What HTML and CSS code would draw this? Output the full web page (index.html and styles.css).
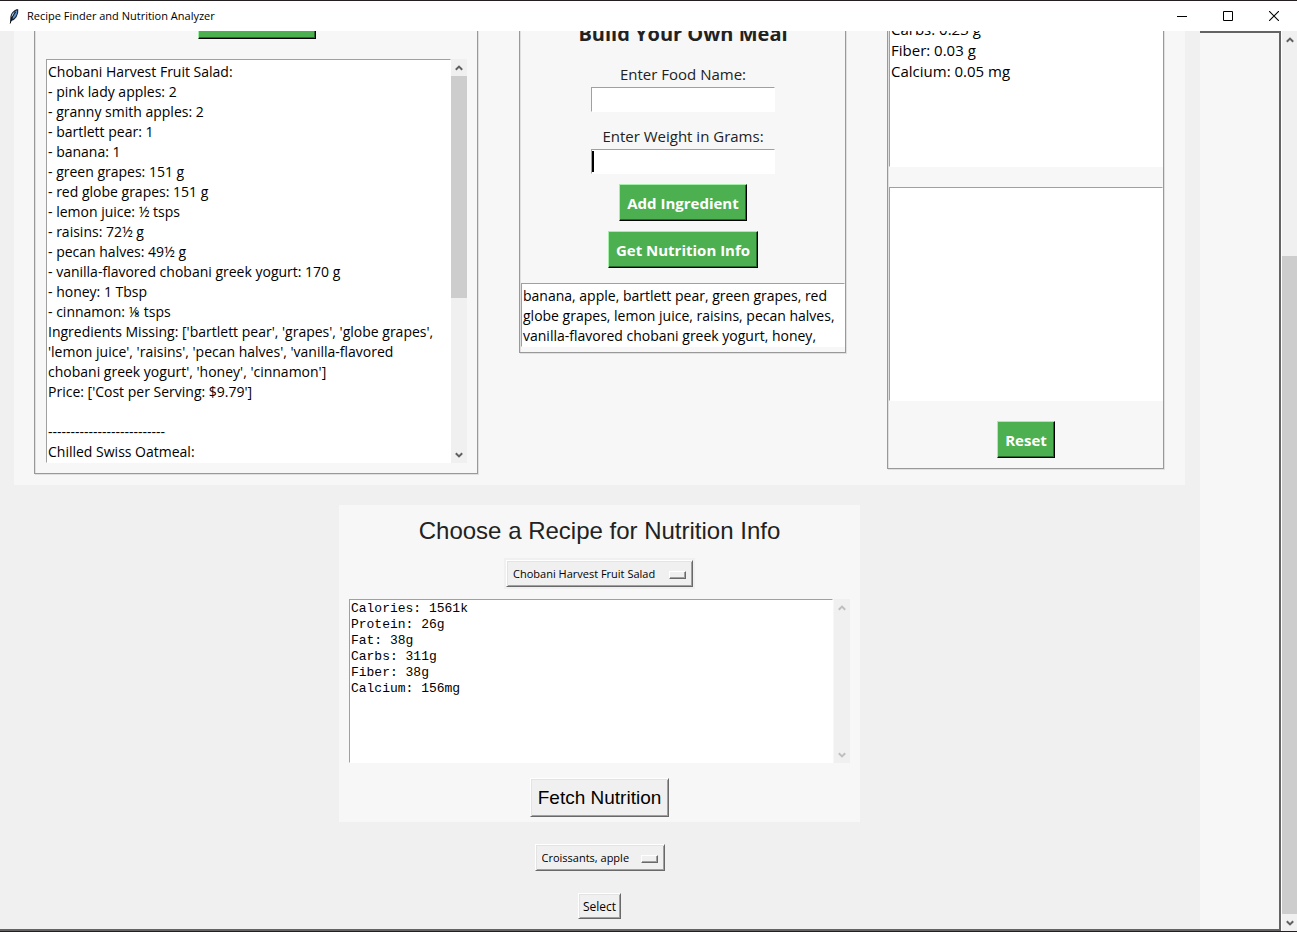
FILE: index.html
```html
<!DOCTYPE html>
<html lang="en">
<head>
<meta charset="utf-8">
<title>Recipe Finder and Nutrition Analyzer</title>
<link rel="stylesheet" href="styles.css">
</head>
<body>
<div class="window">
  <header class="titlebar">
    <svg class="feather" width="16" height="16" viewBox="0 0 16 16" aria-hidden="true">
      <path d="M4 14.5 L4.4 8.5 Q5.5 3 11 1 L12.3 1.4 Q12.8 5 10.6 9 Q8.8 12 5.2 13 Z" fill="#1c2430"/>
      <path d="M6.6 10 Q7 5 10.8 2.2 Q11.8 4 9.8 8 Q8.8 10 6.6 11 Z" fill="#5d93d0"/>
      <path d="M5.4 9 Q6 5 8.6 3.4 L6.6 8.4 Z" fill="#a9c6e6"/>
      <path d="M4.2 15.5 Q5.4 9 9.6 4" fill="none" stroke="#111" stroke-width="1"/>
    </svg>
    <h1 class="title">Recipe Finder and Nutrition Analyzer</h1>
    <div class="controls">
      <button class="control" type="button" aria-label="Minimize"><svg width="10" height="10" viewBox="0 0 10 10"><path d="M0 5.5H10" stroke="#000"/></svg></button>
      <button class="control" type="button" aria-label="Maximize"><svg width="10" height="10" viewBox="0 0 10 10"><path d="M.5 .5H9.5V9.5H.5Z" fill="none" stroke="#000"/></svg></button>
      <button class="control" type="button" aria-label="Close"><svg width="10" height="10" viewBox="0 0 10 10"><path d="M0 0L10 10M10 0L0 10" stroke="#000" stroke-width="1.1"/></svg></button>
    </div>
  </header>
  <div class="body">
    <div class="canvas">
      <main class="content">
        <div class="columns">
          <section class="frame frame-recipes">
            <button class="btn btn-green btn-find" type="button" aria-label="Find recipes"></button>
            <div class="scrolled">
              <textarea class="text recipes" rows="20" aria-label="Recipes" spellcheck="false">Chobani Harvest Fruit Salad:
- pink lady apples: 2
- granny smith apples: 2
- bartlett pear: 1
- banana: 1
- green grapes: 151 g
- red globe grapes: 151 g
- lemon juice: ½ tsps
- raisins: 72½ g
- pecan halves: 49½ g
- vanilla-flavored chobani greek yogurt: 170 g
- honey: 1 Tbsp
- cinnamon: ⅛ tsps
Ingredients Missing: ['bartlett pear', 'grapes', 'globe grapes',
'lemon juice', 'raisins', 'pecan halves', 'vanilla-flavored
chobani greek yogurt', 'honey', 'cinnamon']
Price: ['Cost per Serving: $9.79']

--------------------------
Chilled Swiss Oatmeal:</textarea>
              <div class="bar">
                <svg class="arrow" viewBox="0 0 8 6"><path d="M.8 4.8L4 1.6L7.2 4.8"/></svg>
                <div class="track"><div class="thumb thumb-recipes"></div></div>
                <svg class="arrow" viewBox="0 0 8 6"><path d="M.8 1.2L4 4.4L7.2 1.2"/></svg>
              </div>
            </div>
          </section>
          <section class="frame frame-meal">
            <h2 class="meal-title">Build Your Own Meal</h2>
            <label class="label" for="food">Enter Food Name:</label>
            <div class="entry"><input class="input" id="food" type="text"></div>
            <label class="label" for="weight">Enter Weight in Grams:</label>
            <div class="entry entry-active"><input class="input" id="weight" type="text"></div>
            <button class="btn btn-green btn-meal" type="button">Add Ingredient</button>
            <button class="btn btn-green btn-meal" type="button">Get Nutrition Info</button>
            <textarea class="text ingredients" rows="3" aria-label="Ingredients" spellcheck="false">banana, apple, bartlett pear, green grapes, red
globe grapes, lemon juice, raisins, pecan halves,
vanilla-flavored chobani greek yogurt, honey,</textarea>
          </section>
          <section class="frame frame-info">
            <textarea class="text info info-top" rows="7" aria-label="Nutrition" spellcheck="false">Carbs: 0.23 g
Fiber: 0.03 g
Calcium: 0.05 mg</textarea>
            <textarea class="text info" rows="10" aria-label="Notes"></textarea>
            <button class="btn btn-green btn-reset" type="button">Reset</button>
          </section>
        </div>
        <section class="chooser">
          <h2 class="chooser-title">Choose a Recipe for Nutrition Info</h2>
          <div class="option option-halo">
            <select class="select select-recipe" aria-label="Recipe"><option>Chobani Harvest Fruit Salad</option></select>
          </div>
          <div class="scrolled scrolled-gap">
            <textarea class="text facts" rows="10" aria-label="Recipe nutrition" spellcheck="false">Calories: 1561k
Protein: 26g
Fat: 38g
Carbs: 311g
Fiber: 38g
Calcium: 156mg</textarea>
            <div class="bar bar-off">
              <svg class="arrow" viewBox="0 0 8 6"><path d="M.8 4.8L4 1.6L7.2 4.8"/></svg>
              <svg class="arrow" viewBox="0 0 8 6"><path d="M.8 1.2L4 4.4L7.2 1.2"/></svg>
            </div>
          </div>
          <button class="btn btn-fetch" type="button">Fetch Nutrition</button>
        </section>
        <div class="option option-food">
          <select class="select select-food" aria-label="Food"><option>Croissants, apple</option></select>
        </div>
        <button class="btn btn-select" type="button">Select</button>
      </main>
      <div class="rest"></div>
    </div>
    <div class="bar bar-main">
      <svg class="arrow" viewBox="0 0 8 6"><path d="M.8 4.8L4 1.6L7.2 4.8"/></svg>
      <div class="track track-end"><div class="thumb thumb-main"></div></div>
      <svg class="arrow" viewBox="0 0 8 6"><path d="M.8 1.2L4 4.4L7.2 1.2"/></svg>
    </div>
  </div>
</div>
</body>
</html>
```
FILE: styles.css
```css
* { box-sizing: border-box; }
body { margin: 0; font-family: "Open Sans", "Noto Sans", sans-serif; color: #000; }
h1, h2 { margin: 0; }
.window {
  display: flex; flex-direction: column; height: 100vh; overflow: hidden;
  border-top: 1px solid #231f20; border-bottom: 1px solid #231f20;
}
.titlebar { flex: none; display: flex; align-items: center; height: 30px; padding-left: 6px; background: #fff; }
.title { margin-left: 5px; padding-bottom: 2px; font-size: 11px; font-weight: 400; }
.controls { display: flex; margin-left: auto; }
.control {
  display: grid; place-items: center; width: 46px; height: 30px; padding: 0;
  border: 0; background: none;
}

.body { flex: 1; display: flex; min-height: 0; }
.canvas { flex: 1; display: flex; min-width: 0; overflow: hidden; border-bottom: 2px solid #646464; }
.content {
  flex: 1; display: flex; flex-direction: column; align-items: center;
  margin-top: -50px; padding: 0 15px 0 14px; background: #f0f0f0;
}
.rest { flex: none; width: 81px; border-top: 2px solid #646464; border-right: 2px solid #646464; background: #f7f7f7; }

.columns {
  align-self: stretch; display: grid; grid-template-columns: 444fr 327fr 277fr;
  gap: 41px; align-items: start; padding: 20px 21px 11px 20px; background: #f7f7f7;
}
.frame {
  display: flex; flex-direction: column; align-items: center;
  border: 1px solid #999; box-shadow: 1px 1px 0 #e0e0e0, inset 1px 1px 0 #e0e0e0;
}
.frame-recipes { padding: 0 10px 10px 11px; }
.frame-meal { padding: 18px 0 5px 1px; }
.frame-info { padding: 14px 0 10px 1px; }

.text {
  display: block; width: 100%; margin: 0; padding: 2px 1px 0;
  border: 1px solid #fff; border-top-color: #a0a0a0; border-left-color: #a0a0a0; border-radius: 0;
  outline: 0; resize: none; overflow: hidden; white-space: pre;
  background: #fff; color: #000; font: 14px/20px "Open Sans", "Noto Sans", sans-serif;
}
.text.info { font-size: 15px; line-height: 21px; }
.info-top { margin-bottom: 20px; }
.text.facts { padding: 1px; font: 13px/16px "Liberation Mono", monospace; }
.ingredients { margin-top: 15px; }

.scrolled { display: flex; align-self: stretch; }
.scrolled-gap { gap: 1px; }
.scrolled .text { flex: 1; min-width: 0; }
.bar { flex: none; display: flex; flex-direction: column; align-items: center; width: 16px; background: #f0f0f0; }
.arrow { flex: none; width: 8px; height: 6px; margin: 6px 0 5px; fill: none; stroke: #606060; stroke-width: 2; }
.track { flex: 1; align-self: stretch; display: flex; flex-direction: column; }
.track-end { justify-content: flex-end; }
.thumb { background: #cdcdcd; }
.thumb-recipes { height: 60%; }
.thumb-main { height: 76%; }
.bar-off { justify-content: space-between; }
.bar-off .arrow { stroke: #bfbfbf; }
.bar-main { border-left: 1px solid #fff; }

.btn {
  padding: 0; border: 1px solid; border-color: #fff #696969 #696969 #fff; border-radius: 0;
  box-shadow: inset 1px 1px 0 #e3e3e3, inset -1px -1px 0 #a0a0a0;
  background: #f0f0f0; color: #000; font-family: "Open Sans", "Noto Sans", sans-serif;
}
.btn-green {
  height: 37px; padding: 0 7px; border-color: #a5f0a8 #000 #000 #a5f0a8;
  box-shadow: inset -1px -1px 0 #26692a; background: #4caf50; color: #fff;
  font-size: 15px; font-weight: 700;
}
.btn-find { width: 118px; margin-bottom: 20px; }
.btn-meal { margin-top: 10px; }
.btn-reset { margin-top: 20px; }
.btn-fetch { height: 39px; margin-top: 15px; padding: 0 7px; font: 19px "Liberation Sans", sans-serif; }
.btn-select { height: 26px; margin-top: 22px; padding: 0 4px; font-size: 12px; }

.meal-title { margin-bottom: 16px; color: #222; font-size: 20px; line-height: 28px; }
.label { color: #222; font-size: 15px; line-height: 20px; }
.entry { position: relative; margin-top: 3px; }
.entry + .label { margin-top: 14px; }
.input {
  display: block; width: 184px; height: 25px; padding: 0 3px;
  border: 1px solid #fff; border-top-color: #a0a0a0; border-left-color: #a0a0a0; outline: 0;
  font: 15px "Open Sans", "Noto Sans", sans-serif;
}
.entry-active::after { content: ""; position: absolute; left: 1px; top: 2px; width: 2px; height: 21px; background: #000; }

.chooser {
  display: flex; flex-direction: column; align-items: center; width: 44.5%;
  margin-top: 20px; padding: 9px 10px 5px; background: #f7f7f7;
}
.chooser-title { margin-bottom: 11px; color: #222; font: 24px/33px "Liberation Sans", sans-serif; }
.option { position: relative; }
.option-halo { margin-bottom: 10px; padding: 2px; background: #f0f0f0; }
.option-food { margin-top: 22px; }
.option::after {
  content: ""; position: absolute; right: 7px; top: 50%; width: 15px; height: 6px; margin-top: -3px;
  border: 1px solid; border-color: #fff #696969 #696969 #fff; box-shadow: inset -1px -1px 0 #a0a0a0;
  pointer-events: none;
}
.option-halo::after { right: 9px; }
.select {
  display: block; appearance: none; height: 27px; padding: 0 0 0 6px;
  border: 1px solid; border-color: #fff #696969 #696969 #fff; border-radius: 0; outline: 0;
  box-shadow: inset 1px 1px 0 #e3e3e3, inset -1px -1px 0 #a0a0a0;
  background: #f0f0f0; color: #000; font: 11px "Open Sans", "Noto Sans", sans-serif;
}
.select-recipe { width: 187px; }
.select-food { width: 130px; }
```
